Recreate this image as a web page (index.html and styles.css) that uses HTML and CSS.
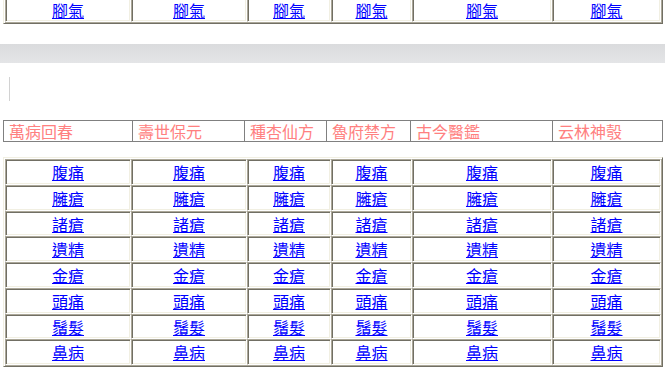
FILE: index.html
```html
<!DOCTYPE html>
<html lang="zh-Hant">
<head>
<meta charset="utf-8">
<title>醫方</title>
<link rel="stylesheet" href="styles.css">
</head>
<body>
<div class="page">
  <div class="grid grid-top">
    <div class="cell"><a href="#">腳氣</a></div>
    <div class="cell"><a href="#">腳氣</a></div>
    <div class="cell"><a href="#">腳氣</a></div>
    <div class="cell"><a href="#">腳氣</a></div>
    <div class="cell"><a href="#">腳氣</a></div>
    <div class="cell"><a href="#">腳氣</a></div>
  </div>

  <div class="bar"></div>

  <div class="marker"></div>

  <div class="books">
    <div class="book">萬病回春</div>
    <div class="book">壽世保元</div>
    <div class="book">種杏仙方</div>
    <div class="book">魯府禁方</div>
    <div class="book">古今醫鑑</div>
    <div class="book">云林神彀</div>
  </div>

  <div class="grid grid-main">
    <div class="cell"><a href="#">腹痛</a></div><div class="cell"><a href="#">腹痛</a></div><div class="cell"><a href="#">腹痛</a></div><div class="cell"><a href="#">腹痛</a></div><div class="cell"><a href="#">腹痛</a></div><div class="cell"><a href="#">腹痛</a></div>
    <div class="cell"><a href="#">臃瘡</a></div><div class="cell"><a href="#">臃瘡</a></div><div class="cell"><a href="#">臃瘡</a></div><div class="cell"><a href="#">臃瘡</a></div><div class="cell"><a href="#">臃瘡</a></div><div class="cell"><a href="#">臃瘡</a></div>
    <div class="cell"><a href="#">諸瘡</a></div><div class="cell"><a href="#">諸瘡</a></div><div class="cell"><a href="#">諸瘡</a></div><div class="cell"><a href="#">諸瘡</a></div><div class="cell"><a href="#">諸瘡</a></div><div class="cell"><a href="#">諸瘡</a></div>
    <div class="cell"><a href="#">遺精</a></div><div class="cell"><a href="#">遺精</a></div><div class="cell"><a href="#">遺精</a></div><div class="cell"><a href="#">遺精</a></div><div class="cell"><a href="#">遺精</a></div><div class="cell"><a href="#">遺精</a></div>
    <div class="cell"><a href="#">金瘡</a></div><div class="cell"><a href="#">金瘡</a></div><div class="cell"><a href="#">金瘡</a></div><div class="cell"><a href="#">金瘡</a></div><div class="cell"><a href="#">金瘡</a></div><div class="cell"><a href="#">金瘡</a></div>
    <div class="cell"><a href="#">頭痛</a></div><div class="cell"><a href="#">頭痛</a></div><div class="cell"><a href="#">頭痛</a></div><div class="cell"><a href="#">頭痛</a></div><div class="cell"><a href="#">頭痛</a></div><div class="cell"><a href="#">頭痛</a></div>
    <div class="cell"><a href="#">鬚髮</a></div><div class="cell"><a href="#">鬚髮</a></div><div class="cell"><a href="#">鬚髮</a></div><div class="cell"><a href="#">鬚髮</a></div><div class="cell"><a href="#">鬚髮</a></div><div class="cell"><a href="#">鬚髮</a></div>
    <div class="cell"><a href="#">鼻病</a></div><div class="cell"><a href="#">鼻病</a></div><div class="cell"><a href="#">鼻病</a></div><div class="cell"><a href="#">鼻病</a></div><div class="cell"><a href="#">鼻病</a></div><div class="cell"><a href="#">鼻病</a></div>
  </div>
</div>
</body>
</html>
```

FILE: styles.css
```css
html, body {
  margin: 0;
  padding: 0;
  background: #ffffff;
  overflow: hidden;
}

body {
  font-family: "Noto Sans CJK TC", "Noto Sans CJK SC", sans-serif;
  font-size: 16px;
}

.page {
  display: flex;
  flex-direction: column;
  width: 665px;
}

.grid {
  display: grid;
  grid-template-columns: 126px 116px 84px 81px 140px 109px;
  width: 656px;
  margin-left: 3px;
  border: 1px solid;
  border-color: #f1efe2 #716f64 #716f64 #f1efe2;
  padding: 1px;
  box-shadow: inset 1px 1px #ffffff, inset -1px -1px #aca899;
}

.grid-top {
  border-top: 0;
  padding-top: 0;
  grid-template-rows: 22px;
  box-shadow: inset 1px 0 #ffffff, inset -1px -1px #aca899;
}

.grid-top .cell {
  border-top: 0;
  align-items: flex-start;
  padding-top: 1px;
  box-shadow: inset 1px 0 #716f64, inset -1px -1px #f1efe2;
}

.grid-main {
  margin-top: 15px;
  grid-template-rows: 26px 26px 25px 26px 26px 26px 25px 26px;
}

.cell {
  box-sizing: border-box;
  height: 100%;
  border: 1px solid;
  border-color: #aca899 #ffffff #ffffff #aca899;
  box-shadow: inset 1px 1px #716f64, inset -1px -1px #f1efe2;
  display: flex;
  align-items: center;
  justify-content: center;
  line-height: 18px;
}

.cell a {
  color: #0000ff;
  text-decoration: underline;
  text-underline-offset: 1px;
}

.bar {
  margin-top: 20px;
  height: 19px;
  background: linear-gradient(#dadbdd, #e4e5e7);
}

.marker {
  margin-top: 14px;
  margin-left: 9px;
  height: 24px;
  width: 0;
  border-left: 1px solid #d2d2d2;
}

.books {
  display: grid;
  grid-template-columns: 129px 112px 82px 84px 142px 110px;
  width: 659px;
  margin-left: 3px;
  margin-top: 19px;
  border-top: 1px solid #808080;
  border-left: 1px solid #808080;
}

.book {
  height: 20px;
  border-right: 1px solid #808080;
  border-bottom: 1px solid #808080;
  color: #ff8080;
  line-height: 20px;
  padding-left: 5px;
  white-space: nowrap;
}
```
